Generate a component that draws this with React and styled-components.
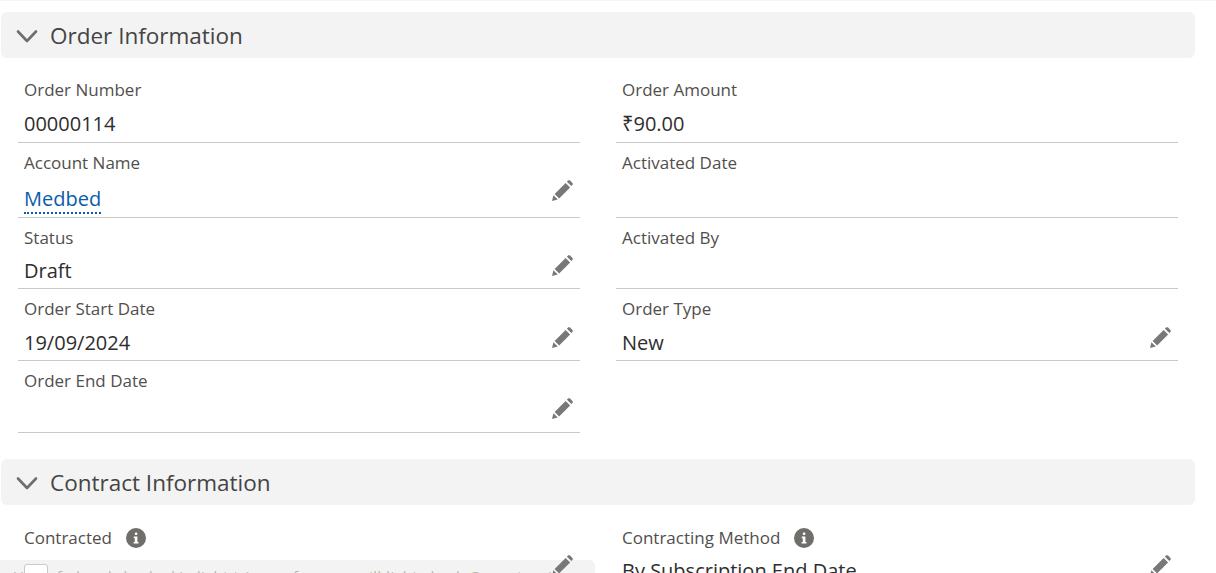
import React from 'react';
import styled, { createGlobalStyle } from 'styled-components';

const GlobalStyle = createGlobalStyle`
  html, body {
    margin: 0;
    height: 100%;
    overflow: hidden;
    background: #fff;
    font-family: "Open Sans", "Noto Sans", sans-serif;
  }
`;

const Page = styled.div`
  position: relative;
  width: 1216px;
  height: 573px;
  overflow: hidden;
  box-sizing: border-box;
  padding: 11px 0 0 1px;
  border-top: 1px solid #f6f6f6;
`;

const SectionHeader = styled.div`
  display: flex;
  align-items: center;
  width: 1194px;
  height: 46px;
  box-sizing: border-box;
  padding-left: 14px;
  gap: 11px;
  background: #f3f3f3;
  border-radius: 6px;
  color: #444;
  font-size: 22.5px;
  margin-top: ${p => p.$top || 0}px;
`;

const FieldGrid = styled.div`
  display: grid;
  grid-template-columns: 562px 562px;
  column-gap: 36px;
  padding: 0 0 0 17px;
  margin-top: ${p => p.$top || 0}px;
`;

const Field = styled.div`
  position: relative;
  height: ${p => p.$h}px;
  box-sizing: border-box;
  padding: ${p => p.$pad || 0}px 6px 0;
  border-bottom: ${p => (p.$plain ? 'none' : '1px solid #c9c9c9')};
`;

const Label = styled.div`
  display: flex;
  align-items: center;
  gap: 14px;
  font-size: 17px;
  line-height: 24px;
  color: #514f4d;
`;

const Value = styled.div`
  font-size: 20px;
  line-height: 28px;
  margin-top: ${p => p.$top || 5}px;
  color: #2e2e2e;
  white-space: nowrap;
`;

const RecordLink = styled.span`
  color: #0b5cab;
  border-bottom: 2px dotted #0b5cab;
`;

const EditButton = styled.span`
  position: absolute;
  z-index: 1;
  right: 7px;
  bottom: ${p => p.$bottom || 15}px;
  width: 22px;
  height: 22px;
  color: #7a7876;
`;

const Strip = styled.div`
  position: absolute;
  left: 0;
  bottom: 0;
  width: 595px;
  height: 13px;
  background: #f3f3f3;
  border-top-right-radius: 6px;
  overflow: hidden;
`;

const StripBox = styled.span`
  position: absolute;
  left: 24px;
  top: 4px;
  width: 22px;
  height: 20px;
  background: #fff;
  border: 1px solid #c9c9c9;
  border-radius: 3px;
`;

const StripText = styled.span`
  position: absolute;
  left: 13px;
  top: 6px;
  font-size: 15px;
  line-height: 20px;
  letter-spacing: 0.25px;
  color: #b9b9a8;
  white-space: nowrap;
`;

const Chevron = () => (
  <svg width="24" height="24" viewBox="0 0 24 24" fill="none">
    <path d="M3 8.5 12 18 21 8.5" stroke="#706e6b" strokeWidth="2.6" strokeLinecap="round" strokeLinejoin="round" />
  </svg>
);

const Pencil = () => (
  <svg width="22" height="22" viewBox="0 0 22 22" fill="currentColor">
    <path d="M1 21 2.4 15.2 6.8 19.6Z" />
    <path d="M3.6 13.9 14.6 2.9 19.1 7.4 8.1 18.4Z" />
    <path d="M15.9 1.7 17 .6C17.6 0 18.5 0 19.1 .6L21.4 2.9C22 3.5 22 4.4 21.4 5L20.3 6.1Z" />
  </svg>
);

const InfoIcon = () => (
  <svg width="20" height="20" viewBox="0 0 20 20">
    <circle cx="10" cy="10" r="10" fill="#706e6b" />
    <rect x="8.8" y="4.4" width="2.6" height="2.6" rx="1" fill="#fff" />
    <path d="M7.8 8.6h3.6v5.4h1.1v1.6H7.6V14h1.2v-3.8h-1Z" fill="#fff" />
  </svg>
);

const Edit = ({ bottom }) => (
  <EditButton $bottom={bottom}>
    <Pencil />
  </EditButton>
);

export default function App() {
  return (
    <Page>
      <GlobalStyle />
      <SectionHeader>
        <Chevron />
        Order Information
      </SectionHeader>
      <FieldGrid>
        <Field $h={85} $pad={20}>
          <Label>Order Number</Label>
          <Value $top={8}>00000114</Value>
        </Field>
        <Field $h={85} $pad={20}>
          <Label>Order Amount</Label>
          <Value $top={8}>₹90.00</Value>
        </Field>
        <Field $h={75} $pad={8}>
          <Label>Account Name</Label>
          <Value $top={10}>
            <RecordLink>Medbed</RecordLink>
          </Value>
          <Edit />
        </Field>
        <Field $h={75} $pad={8}>
          <Label>Activated Date</Label>
        </Field>
        <Field $h={71} $pad={8}>
          <Label>Status</Label>
          <Value $top={7}>Draft</Value>
          <Edit bottom={11} />
        </Field>
        <Field $h={71} $pad={8}>
          <Label>Activated By</Label>
        </Field>
        <Field $h={72} $pad={8}>
          <Label>Order Start Date</Label>
          <Value $top={8}>19/09/2024</Value>
          <Edit bottom={11} />
        </Field>
        <Field $h={72} $pad={8}>
          <Label>Order Type</Label>
          <Value $top={8}>New</Value>
          <Edit bottom={11} />
        </Field>
        <Field $h={72} $pad={8}>
          <Label>Order End Date</Label>
          <Edit bottom={12} />
        </Field>
      </FieldGrid>
      <SectionHeader $top={26}>
        <Chevron />
        Contract Information
      </SectionHeader>
      <FieldGrid $top={21}>
        <Field $plain $h={70}>
          <Label>
            Contracted <InfoIcon />
          </Label>
          <Edit bottom={19} />
        </Field>
        <Field $plain $h={70}>
          <Label>
            Contracting Method <InfoIcon />
          </Label>
          <Value $top={7}>By Subscription End Date</Value>
          <Edit bottom={19} />
        </Field>
      </FieldGrid>
      <Strip>
        <StripText>Use&nbsp;&nbsp;&nbsp;&nbsp;fed and checked in light-triggers for page will-light-check @pageturnit</StripText>
        <StripBox />
      </Strip>
    </Page>
  );
}
